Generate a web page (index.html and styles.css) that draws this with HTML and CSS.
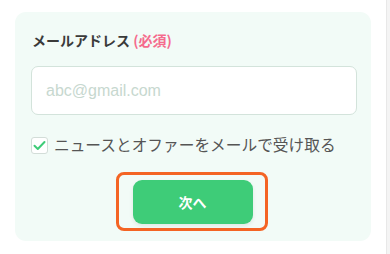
FILE: index.html
```html
<!DOCTYPE html>
<html lang="ja">
<head>
<meta charset="utf-8">
<link rel="stylesheet" href="styles.css">
</head>
<body>
<div class="layout">
  <main class="page">
    <section class="card">
      <label class="label" for="email">メールアドレス <span class="req">(必須)</span></label>
      <input class="input" id="email" type="email" placeholder="abc@gmail.com">
      <div class="check-row">
        <span class="checkbox">
          <svg width="13" height="11" viewBox="0 0 13 11"><path d="M1.5 5.8 L4.8 9 L11.5 2" fill="none" stroke="#3ecc78" stroke-width="2" stroke-linecap="round" stroke-linejoin="round"/></svg>
        </span>
        <span class="check-text">ニュースとオファーをメールで受け取る</span>
      </div>
      <div class="btn-wrap">
        <div class="highlight">
          <button class="btn" type="button">次へ</button>
        </div>
      </div>
    </section>
  </main>
  <div class="scroll"></div>
</div>
</body>
</html>
```
FILE: styles.css
```css
html, body {
  margin: 0;
  padding: 0;
  background: #ffffff;
}
body {
  font-family: "Noto Sans CJK JP", "Noto Sans", sans-serif;
  width: 390px;
  height: 254px;
  overflow: hidden;
}
.layout {
  display: flex;
  height: 254px;
}
.page {
  flex: 1;
  padding: 12px 15px 0 15px;
}
.scroll {
  width: 3px;
  background: #f4f4f4;
  border-left: 1px solid #e8e8e8;
}
.card {
  width: 356px;
  box-sizing: border-box;
  background: #f2fbf7;
  border-radius: 11px;
  padding: 18px 14px 10px 16px;
  display: flex;
  flex-direction: column;
}
.label {
  font-size: 14px;
  line-height: 20px;
  font-weight: 700;
  color: #3a3a3a;
  margin-left: 1px;
}
.req {
  color: #f56b8d;
}
.input {
  margin-top: 16px;
  height: 49px;
  width: 326px;
  box-sizing: border-box;
  border: 1px solid #d3e3db;
  border-radius: 7px;
  background: #ffffff;
  padding: 0 14px;
  font-family: "Liberation Sans", Arial, sans-serif;
  font-size: 16px;
  outline: none;
}
.input::placeholder {
  color: #c7d8cf;
}
.check-row {
  margin-top: 20px;
  height: 20px;
  display: flex;
  align-items: center;
  gap: 6px;
}
.checkbox {
  width: 17px;
  height: 17px;
  box-sizing: border-box;
  border: 1px solid #d3ddd8;
  border-radius: 3px;
  background: #ffffff;
  display: flex;
  align-items: center;
  justify-content: center;
}
.check-text {
  font-size: 15.7px;
  line-height: 20px;
  color: #555555;
}
.btn-wrap {
  margin-top: 17px;
  display: flex;
  justify-content: center;
}
.highlight {
  border: 3px solid #f46424;
  border-radius: 8px;
  padding: 5px 12px 4px 14px;
  margin-right: 5px;
}
.btn {
  display: block;
  width: 120px;
  height: 44px;
  border: none;
  border-radius: 9px;
  background: #3ecc78;
  color: #ffffff;
  font-family: "Noto Sans CJK JP", sans-serif;
  font-size: 14px;
  font-weight: 700;
  box-shadow: 0 2px 4px rgba(0, 0, 0, 0.08);
}
```
